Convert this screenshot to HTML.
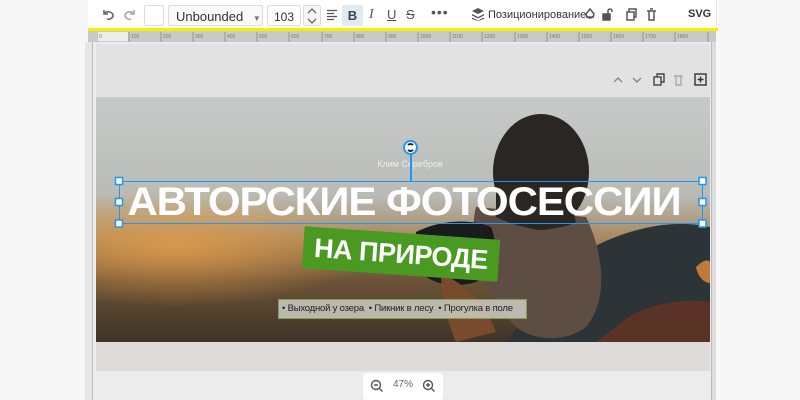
<!DOCTYPE html>
<html><head><meta charset="utf-8"><style>
*{margin:0;padding:0;box-sizing:border-box}
body{width:800px;height:400px;overflow:hidden;background:#f7f7f7;font-family:"Liberation Sans",sans-serif;position:relative}
.a{position:absolute}
.tb{left:88px;top:0;width:630px;height:29px;background:#fff}
.yl{left:88px;top:28px;width:630px;height:3px;background:#f3f000}
.ic{position:absolute;top:7px;color:#555;font-size:14px}
</style></head><body>
<div class="a tb"></div>
<div class="a" style="left:716px;top:0;width:1px;height:29px;background:#e4e4e4"></div>
<div class="a yl"></div>
<svg class="a" style="left:100px;top:7px" width="40" height="16" viewBox="0 0 40 16" fill="none" stroke="#666" stroke-width="1.6"><path d="M4 3v4h4M4 7c2-3 8-3 9 1 0 3-3 5-6 4"/><path d="M34 3v4h-4M34 7c-2-3-8-3-9 1 0 3 3 5 6 4" stroke="#aaa"/></svg>
<div class="a" style="left:144px;top:5px;width:20px;height:21px;border:1px solid #ddd;border-radius:2px;background:#fff"></div>
<div class="a" style="left:168px;top:5px;width:95px;height:21px;border:1px solid #ddd;border-radius:2px;background:#fafafa;font-size:13px;color:#333;padding:3px 0 0 7px">Unbounded <span style="font-size:8px;color:#777;margin-left:6px">▼</span></div>
<div class="a" style="left:267px;top:5px;width:34px;height:21px;border:1px solid #ddd;border-radius:2px;background:#fff;font-size:12px;color:#333;padding:4px 0 0 6px">103</div>
<div class="a" style="left:303px;top:5px;width:18px;height:21px;border:1px solid #ddd;border-radius:2px;background:#f6f6f6"></div>
<svg class="a" style="left:306px;top:7px" width="12" height="18" fill="none" stroke="#666" stroke-width="1.3"><path d="M2 6l4-4 4 4M2 12l4 4 4-4"/></svg>
<svg class="a" style="left:326px;top:9px" width="12" height="12" stroke="#555" stroke-width="1.3"><path d="M1 1.5h10M1 4.5h7M1 7.5h10M1 10.5h7"/></svg>
<div class="a" style="left:342px;top:5px;width:21px;height:21px;background:#e4e9ef;border-radius:2px;font-weight:bold;font-size:13px;color:#345;text-align:center;line-height:21px">B</div>
<div class="ic" style="left:369px;font-style:italic;font-family:'Liberation Serif';font-size:14px">I</div>
<div class="ic" style="left:387px;text-decoration:underline;font-size:13px">U</div>
<div class="ic" style="left:406px;text-decoration:line-through;font-size:13px">S</div>
<div class="ic" style="left:431px;top:4px;font-size:14px;letter-spacing:1px">•••</div>
<svg class="a" style="left:472px;top:8px" width="12" height="13" fill="#555"><path d="M6 0l6 3-6 3-6-3z"/><path d="M0 6l6 3 6-3v1.5l-6 3-6-3z"/><path d="M0 9.5l6 3 6-3V11l-6 2-6-2z"/></svg>
<div class="a" style="left:488px;top:9px;font-size:11px;color:#333">Позиционирование</div>
<svg class="a" style="left:583px;top:7px" width="80" height="16" fill="none" stroke="#555" stroke-width="1.5"><path d="M7 2l4 5a4 4 0 1 1-8 0z"/><path d="M3 10h8" /><rect x="20" y="7" width="7" height="6" fill="#555"/><path d="M25 7V4a2 2 0 0 1 4 0v1"/><rect x="44" y="5" width="7" height="8"/><path d="M46 5V2h7v8h-2"/><path d="M64 4h9M66 4v9h5V4M67 2h3"/></svg>
<div class="a" style="left:688px;top:8px;font-size:11px;font-weight:bold;color:#333">SVG</div>
<div class="a" style="left:88px;top:31px;width:628px;height:11px;background:#c9c9c9"></div>
<div class="a" style="left:97px;top:32px;width:31px;height:9px;background:#ececec"></div>
<svg class="a" style="left:97px;top:31px" width="620" height="11" font-size="5" fill="#777" font-family="Liberation Sans">
<g stroke="#888" stroke-width="0.8">
<path d="M0 1v10M32 1v10M64 1v10M96 1v10M128 1v10M160 1v10M192 1v10M225 1v10M257 1v10M289 1v10M321 1v10M353 1v10M385 1v10M418 1v10M450 1v10M482 1v10M514 1v10M546 1v10M578 1v10M611 1v10"/></g>
<text x="2" y="7">0</text><text x="34" y="7">100</text><text x="66" y="7">200</text><text x="98" y="7">300</text><text x="130" y="7">400</text><text x="162" y="7">500</text><text x="194" y="7">600</text><text x="227" y="7">700</text><text x="259" y="7">800</text><text x="291" y="7">900</text><text x="323" y="7">1000</text><text x="355" y="7">1100</text><text x="387" y="7">1200</text><text x="420" y="7">1300</text><text x="452" y="7">1400</text><text x="484" y="7">1500</text><text x="516" y="7">1600</text><text x="548" y="7">1700</text><text x="580" y="7">1800</text>
</svg>
<div class="a" style="left:85px;top:42px;width:8px;height:358px;background:#e6e6e6;border-right:1px solid #bbb"></div>
<div class="a" style="left:93px;top:42px;width:623px;height:358px;background:#ececec"></div>
<div class="a" style="left:711px;top:42px;width:5px;height:358px;background:#ddd;border-left:1px solid #bbb"></div>
<div class="a" style="left:96px;top:44px;width:614px;height:53px;background:#e2e2e2"></div>
<svg class="a" style="left:610px;top:72px" width="100" height="16" fill="none" stroke="#888" stroke-width="1.4"><path d="M4 10l4-4 4 4"/><path d="M23 6l4 4 4-4"/><rect x="44" y="5" width="7" height="8" stroke="#444"/><path d="M47 5V2h7v8h-3" stroke="#444"/><path d="M64 4h9M66 4v9h5V4" stroke="#aaa"/><rect x="85" y="2" width="11" height="11" stroke="#333"/><path d="M90.5 4.5v6M87.5 7.5h6" stroke="#333"/></svg>
<!-- photo -->
<div class="a" style="left:96px;top:97px;width:614px;height:245px;overflow:hidden;background:linear-gradient(180deg,#c6cac9 0%,#b9bbb6 40%,#a8875e 58%,#6b5236 75%,#3e3327 100%)">
<div class="a" style="left:0;top:0;width:614px;height:245px;background:radial-gradient(ellipse 200px 60px at 80px 150px,rgba(235,160,70,.75),rgba(200,120,50,0) 100%)"></div>
<svg class="a" style="left:0;top:0" width="614" height="245">
<path d="M614 130C570 120 520 135 480 160 450 190 430 220 410 245H614z" fill="#2d3437"/>
<path d="M600 170c8-8 14-8 14-4v20c-6 0-12-6-14-16z" fill="#c07a3a"/>
<path d="M380 110c-10 40 10 90 40 120 20 15 50 15 70 0 25-30 15-80 0-110z" fill="#5e4d42"/>
<ellipse cx="445" cy="75" rx="48" ry="58" fill="#2a2624"/>
<path d="M400 80c20 10 50 15 70 5l10 40c-20 10-50 10-80-5z" fill="#2a2624"/>
<path d="M320 135c20-10 50-15 75-5 8 20 5 45-15 55-25 8-55 0-62-20z" fill="#1a1b1d"/>
<path d="M345 175c15 10 40 20 55 60l-40 10c-10-25-15-45-15-70z" fill="#7a4a2c"/>
<path d="M520 230c20-20 60-30 94-25v40H500z" fill="#5a3226"/>
</svg>
</div>
<div class="a" style="left:96px;top:342px;width:614px;height:29px;background:#dddcdb"></div>
<div class="a" style="left:300px;top:159px;width:220px;text-align:center;font-size:9px;color:#eee">Клим Серебров</div>
<div class="a" style="left:104px;top:180px;width:600px;text-align:center;font-size:40px;font-weight:bold;color:#fff;letter-spacing:-1px;line-height:44px;transform:scaleX(1.05);white-space:nowrap">АВТОРСКИЕ ФОТОСЕССИИ</div>
<div class="a" style="left:303px;top:233px;width:196px;height:42px;background:#4a9a22;transform:rotate(4deg);color:#fff;font-weight:bold;font-size:27px;text-align:center;line-height:42px;letter-spacing:-0.5px">НА ПРИРОДЕ</div>
<div class="a" style="left:278px;top:299px;width:249px;height:20px;background:rgba(205,205,195,.85);border:1px solid #7da055;font-size:9.5px;color:#222;line-height:18px;padding-left:3px;white-space:nowrap;letter-spacing:-0.2px">• Выходной у озера &nbsp;• Пикник в лесу &nbsp;• Прогулка в поле</div>
<div class="a" style="left:119px;top:181px;width:584px;height:43px;border:1.5px solid #2196f3"></div>
<div class="a" style="left:410px;top:153px;width:1.5px;height:28px;background:#2196f3"></div>
<div class="a" style="left:403px;top:140px;width:15px;height:15px;border-radius:50%;background:#fff;border:2px solid #2196f3"></div>
<div class="a" style="left:406px;top:143px;width:9px;height:9px;border-radius:50%;border:2px solid #222;border-left-color:transparent;border-right-color:transparent"></div>
<svg class="a" style="left:0;top:0" width="800" height="400" fill="#fff" stroke="#2196f3" stroke-width="1.5"><rect x="115.5" y="177.5" width="7" height="7"/><rect x="115.5" y="198.5" width="7" height="7"/><rect x="115.5" y="220" width="7" height="7"/><rect x="699" y="177.5" width="7" height="7"/><rect x="699" y="198.5" width="7" height="7"/><rect x="699" y="220" width="7" height="7"/></svg>
<div class="a" style="left:363px;top:373px;width:80px;height:27px;background:#fff;border-radius:3px"></div>
<svg class="a" style="left:370px;top:379px" width="66" height="14" fill="none" stroke="#555" stroke-width="1.4"><circle cx="6" cy="6" r="4.5"/><path d="M9.5 9.5l3 3M4 6h4"/><circle cx="58" cy="6" r="4.5"/><path d="M61.5 9.5l3 3M56 6h4M58 4v4"/></svg>
<div class="a" style="left:393px;top:379px;font-size:10px;color:#666">47%</div>
</body></html>
